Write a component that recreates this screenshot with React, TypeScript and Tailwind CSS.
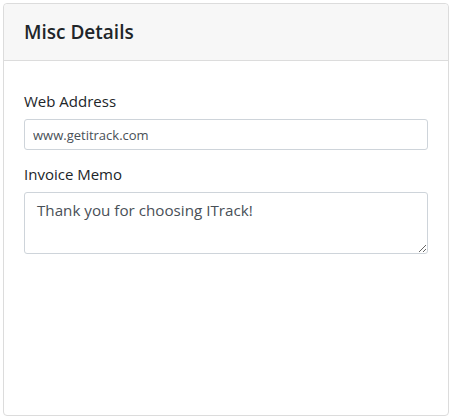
import { useState } from 'react';

// 기타 정보 카드
export default function App() {
  const [webAddress, setWebAddress] = useState('www.getitrack.com');
  const [memo, setMemo] = useState('Thank you for choosing ITrack!');

  return (
    <div className="p-[3px] bg-white" style={{ fontFamily: '"Open Sans", "Noto Sans", sans-serif' }}>
      <div className="flex h-[413px] w-[446px] flex-col rounded-[4px] border border-[#dcdcdc] bg-white">
        {/* 헤더 */}
        <div className="flex h-[57px] items-center rounded-t-[4px] border-b border-[#dcdcdc] bg-[#f7f7f7] px-5">
          <h2 className="text-[19px] font-semibold text-[#212529]">Misc Details</h2>
        </div>

        <div className="flex flex-col px-5 pt-[29px]">
          <label className="mb-[7px] text-[15px] leading-[22px] text-[#212529]">Web Address</label>
          <input
            value={webAddress}
            onChange={(e) => setWebAddress(e.target.value)}
            className="h-[31px] rounded-[3px] border border-[#ced4da] px-2 text-[13px] text-[#495057] outline-none"
          />

          <label className="mb-[7px] mt-[13px] text-[15px] leading-[22px] text-[#212529]">Invoice Memo</label>
          <textarea
            value={memo}
            onChange={(e) => setMemo(e.target.value)}
            className="h-[62px] rounded-[3px] border border-[#ced4da] px-3 py-[6px] text-[15.2px] text-[#495057] outline-none"
          />
        </div>
      </div>
    </div>
  );
}
